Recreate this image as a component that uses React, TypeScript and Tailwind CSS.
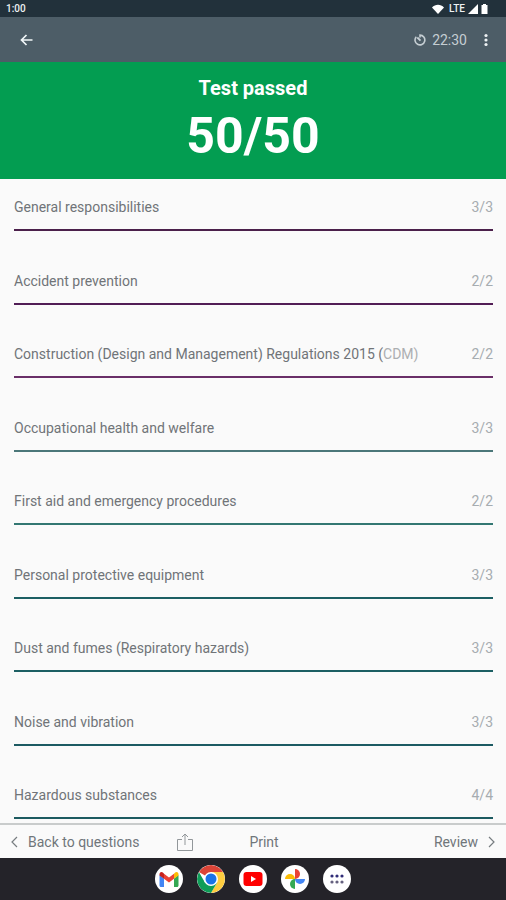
import React from "react";

type Topic = { name: string; faded?: string; score: string; line: string };

const topics: Topic[] = [
  { name: "General responsibilities", score: "3/3", line: "border-[#4b204b]" },
  { name: "Accident prevention", score: "2/2", line: "border-[#511d55]" },
  {
    name: "Construction (Design and Management) Regulations 2015 (",
    faded: "CDM)",
    score: "2/2",
    line: "border-[#6a2f68]",
  },
  { name: "Occupational health and welfare", score: "3/3", line: "border-[#4b7779]" },
  { name: "First aid and emergency procedures", score: "2/2", line: "border-[#337772]" },
  { name: "Personal protective equipment", score: "3/3", line: "border-[#1c5f63]" },
  { name: "Dust and fumes (Respiratory hazards)", score: "3/3", line: "border-[#1c5f63]" },
  { name: "Noise and vibration", score: "3/3", line: "border-[#1c5a62]" },
  { name: "Hazardous substances", score: "4/4", line: "border-[#1c5a60]" },
];

function StatusBar() {
  return (
    <div className="flex h-[17px] shrink-0 items-center justify-between bg-[#22313b] pr-[18px] pl-1.5 text-[10px] font-medium text-[#eef2f4]">
      <span>1:00</span>
      <div className="flex items-center gap-[3px]">
        <svg width="12" height="10" viewBox="0 0 12 10" fill="white" aria-hidden="true">
          <path d="M6 10 0 3.500C3.300-.2 8.700-.2 12 3.500Z" />
        </svg>
        <span className="pl-0.5">LTE</span>
        <svg width="10" height="10" viewBox="0 0 10 10" fill="white" aria-hidden="true">
          <path d="M10 0v10H0Z" />
        </svg>
        <svg width="7" height="10" viewBox="0 0 7 10" fill="white" aria-hidden="true">
          <path d="M2 0h3v1h1.500v9h-6V1H2Z" />
        </svg>
      </div>
    </div>
  );
}

function AppBar() {
  return (
    <header className="flex h-[45px] shrink-0 items-center justify-between bg-[#4d5d67] pr-[13px] pl-5">
      <button type="button" aria-label="Back">
        <svg width="13" height="12" viewBox="0 0 13 12" fill="none" stroke="#f1f6f8" strokeWidth="1.700" aria-hidden="true">
          <path d="M12.500 6H1.500M6.500 1l-5 5 5 5" />
        </svg>
      </button>
      <div className="flex items-center text-[#c5ced3]">
        <svg width="12" height="12" viewBox="0 0 12 12" fill="none" stroke="currentColor" strokeWidth="1.600" aria-hidden="true">
          <path d="M6 3.600V1.100A4.900 4.900 0 1 1 2.300 2.700" />
          <path d="M3.300 3.500 6.500 6.700" strokeWidth="1.900" />
        </svg>
        <span className="pl-1.5 text-sm">22:30</span>
        <button type="button" aria-label="More options" className="pl-3">
          <svg width="14" height="14" viewBox="0 0 14 14" fill="#eef2f4" aria-hidden="true">
            <circle cx="7" cy="2.500" r="1.600" />
            <circle cx="7" cy="7" r="1.600" />
            <circle cx="7" cy="11.500" r="1.600" />
          </svg>
        </button>
      </div>
    </header>
  );
}

function Dock() {
  const tile = "flex size-7 items-center justify-center overflow-hidden rounded-full bg-white";
  return (
    <nav aria-label="Apps" className="flex h-[42px] shrink-0 items-center justify-center gap-3.5 bg-[#242329]">
      <button type="button" aria-label="Gmail" className={tile}>
        <svg width="20" height="15" viewBox="0 0 20 15" aria-hidden="true">
          <path fill="#4285f4" d="M.5 3v10.500c0 .8.600 1.500 1.500 1.500h3V6.500Z" />
          <path fill="#34a853" d="M15 15h3c.9 0 1.500-.7 1.500-1.500V3L15 6.500Z" />
          <path fill="#fbbc04" d="M15 1.800v5l4.500-3.300V2.200c0-2-2.200-2.800-3.600-1.500Z" />
          <path fill="#c5221f" d="M.5 2.200v1.300L5 6.800v-5L4.100.7C2.700-.6.5.2.5 2.200Z" />
          <path fill="#ea4335" d="M5 6.800v-5l5 3.800 5-3.800v5l-5 3.800Z" />
        </svg>
      </button>
      <button type="button" aria-label="Chrome" className={tile}>
        <svg width="28" height="28" viewBox="0 0 28 28" aria-hidden="true">
          <path fill="#db4437" d="M14 14 1.900 7A14 14 0 0 1 26.100 7H14Z" />
          <path fill="#ffcd40" d="M14 7h12.100A14 14 0 0 1 14 28l6.100-10.500Z" />
          <path fill="#0f9d58" d="M1.900 7A14 14 0 0 0 14 28l6.100-10.500L14 14 7.900 17.500Z" />
          <circle cx="14" cy="14" r="7" fill="white" />
          <circle cx="14" cy="14" r="5.500" fill="#1a73e8" />
        </svg>
      </button>
      <button type="button" aria-label="YouTube" className={tile}>
        <svg width="20" height="14" viewBox="0 0 20 14" aria-hidden="true">
          <rect x=".5" width="19" height="14" rx="3" fill="#ff0000" />
          <path d="m8 4 5 3-5 3Z" fill="white" />
        </svg>
      </button>
      <button type="button" aria-label="Photos" className={tile}>
        <svg width="20" height="20" viewBox="0 0 20 20" aria-hidden="true">
          <path fill="#ea4335" d="M10 0a5 5 0 0 1 5 5 5 5 0 0 1-5 5Z" />
          <path fill="#4285f4" d="M20 10a5 5 0 0 1-10 0Z" />
          <path fill="#34a853" d="M10 20a5 5 0 0 1 0-10Z" />
          <path fill="#fbbc04" d="M0 10a5 5 0 0 1 10 0Z" />
        </svg>
      </button>
      <button type="button" aria-label="All apps" className={tile}>
        <svg width="14" height="10" viewBox="0 0 14 10" aria-hidden="true">
          <g fill="#302c78">
            <circle cx="2" cy="2" r="1.600" />
            <circle cx="7" cy="2" r="1.600" />
            <circle cx="12" cy="2" r="1.600" />
          </g>
          <g fill="#65617f">
            <circle cx="2" cy="8" r="1.600" />
            <circle cx="7" cy="8" r="1.600" />
            <circle cx="12" cy="8" r="1.600" />
          </g>
        </svg>
      </button>
    </nav>
  );
}

export default function App() {
  return (
    <div className="flex min-h-screen flex-col bg-[#fafafa] font-[Roboto,sans-serif]">
      <StatusBar />
      <AppBar />
      <section className="flex h-[117px] shrink-0 flex-col items-center bg-[#039d51] pt-3.5 text-white">
        <h1 className="text-xl leading-6 font-bold">Test passed</h1>
        <p className="pt-1 text-[50px] leading-[64px] font-bold">50/50</p>
      </section>
      <ul className="flex flex-1 flex-col justify-between pt-[18px] pr-[13px] pb-1 pl-3.5">
        {topics.map((t) => (
          <li key={t.name} className={`flex h-[34px] items-start justify-between border-b-2 text-sm leading-5 ${t.line}`}>
            <span className="text-[#707478]">
              {t.name}
              {t.faded && <span className="text-[#acaeb1]">{t.faded}</span>}
            </span>
            <span className="text-[#a6acb0]">{t.score}</span>
          </li>
        ))}
      </ul>
      <footer className="flex h-[35px] shrink-0 items-center border-t-2 border-[#c9cccc] px-2 text-sm text-[#70767a]">
        <button type="button" className="flex items-center gap-2">
          <svg width="12" height="12" viewBox="0 0 12 12" fill="none" stroke="#777d80" strokeWidth="1.200" aria-hidden="true">
            <path d="M9 1 4 6l5 5" />
          </svg>
          Back to questions
        </button>
        <button type="button" aria-label="Share" className="ml-[38px]">
          <svg width="16" height="18" viewBox="0 0 16 18" fill="none" stroke="#92979a" aria-hidden="true">
            <path d="M5 6.500H.5v11h15v-11H11M8 12V1M5 4l3-3 3 3" />
          </svg>
        </button>
        <button type="button" className="ml-14">Print</button>
        <button type="button" className="ml-auto flex items-center gap-2">
          Review
          <svg width="12" height="12" viewBox="0 0 12 12" fill="none" stroke="#777d80" strokeWidth="1.200" aria-hidden="true">
            <path d="m3 1 5 5-5 5" />
          </svg>
        </button>
      </footer>
      <Dock />
    </div>
  );
}
